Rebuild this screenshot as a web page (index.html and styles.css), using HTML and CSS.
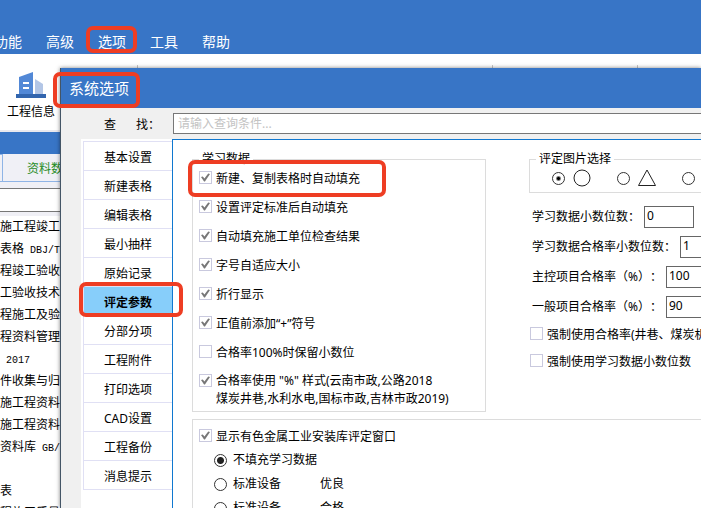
FILE: index.html
```html
<!DOCTYPE html>
<html lang="zh-CN">
<head>
    <meta charset="UTF-8">
    <meta name="viewport" content="width=device-width, initial-scale=1.0">
    <title>系统选项</title>
    <link rel="stylesheet" href="styles.css">
</head>
<body>

    <div class="main-window">
        <nav class="menu">
            <button>功能</button>
            <button>高级</button>
            <button class="mark mark-menu">选项</button>
            <button>工具</button>
            <button>帮助</button>
        </nav>

        <div class="toolbar">
            <div class="group first">
                <button class="tool">
                    <svg width="30" height="28" viewBox="0 0 30 28">
                        <path d="M3 6L17 1V24H3Z" fill="#5288d6"/>
                        <path d="M19 8L27 13V24H19Z" fill="#b3c6e6"/>
                        <path d="M7 11H13V13H7ZM7 16H13V18H7Z" fill="#fff"/>
                        <path d="M0 23H30V27H0Z" fill="#3265ae"/>
                    </svg>
                    工程信息
                </button>
            </div>
            <div class="group wide"></div>
            <div class="group"></div>
        </div>

        <div class="strip"></div>
        <div class="doc-tabs"><div class="tab-edge"></div><span>资料数据</span></div>
        <div class="filter"></div>

        <ul class="file-list">
            <li>施工程竣工验收</li>
            <li>表格<span class="latin"> DBJ/T</span></li>
            <li>程竣工验收资料</li>
            <li>工验收技术资料</li>
            <li>程施工及验收</li>
            <li>程资料管理规程</li>
            <li><span class="latin"> 2017</span></li>
            <li>件收集与归档</li>
            <li>施工程资料管理</li>
            <li>施工程资料管理</li>
            <li>资料库<span class="latin"> GB/T</span></li>
            <li></li>
            <li>表</li>
            <li>程施工质量验收</li>
        </ul>
    </div>

    <div class="dialog">
        <div class="dialog-title"><span class="mark mark-title">系统选项</span></div>
        <div class="search">
            <label for="query"><span>查</span><span>找：</span></label>
            <input type="text" id="query" placeholder="请输入查询条件...">
        </div>

        <div class="content">
            <div class="side">
                <button>基本设置</button>
                <button>新建表格</button>
                <button>编辑表格</button>
                <button>最小抽样</button>
                <button>原始记录</button>
                <button class="active mark mark-side">评定参数</button>
                <button>分部分项</button>
                <button>工程附件</button>
                <button>打印选项</button>
                <button>CAD设置</button>
                <button>工程备份</button>
                <button>消息提示</button>
            </div>

            <div class="panel">
                <div class="columns">
                    <fieldset class="learn">
                        <legend>学习数据</legend>
                        <label class="check mark mark-check"><input type="checkbox" checked>新建、复制表格时自动填充</label>
                        <label class="check"><input type="checkbox" checked>设置评定标准后自动填充</label>
                        <label class="check"><input type="checkbox" checked>自动填充施工单位检查结果</label>
                        <label class="check"><input type="checkbox" checked>字号自适应大小</label>
                        <label class="check"><input type="checkbox" checked>折行显示</label>
                        <label class="check"><input type="checkbox" checked>正值前添加“+”符号</label>
                        <label class="check"><input type="checkbox">合格率100%时保留小数位</label>
                        <label class="check two-line"><input type="checkbox" checked><span>合格率使用 "%" 样式(云南市政,公路2018<br>煤炭井巷,水利水电,国标市政,吉林市政2019)</span></label>
                    </fieldset>

                    <div class="right">
                        <fieldset class="shapes">
                            <legend>评定图片选择</legend>
                            <label>
                                <input type="radio" name="shape" aria-label="圆形" checked>
                                <svg width="18" height="18" viewBox="0 0 18 18"><circle cx="9" cy="9" r="8" fill="none" stroke="#222"/></svg>
                            </label>
                            <label>
                                <input type="radio" name="shape" aria-label="三角形">
                                <svg width="18" height="18" viewBox="0 0 18 18"><path d="M9 1L17.5 16.5H0.5Z" fill="none" stroke="#222"/></svg>
                            </label>
                            <label>
                                <input type="radio" name="shape" aria-label="无">
                            </label>
                        </fieldset>

                        <div class="field"><label for="digits">学习数据小数位数：</label><input type="text" id="digits" value="0"></div>
                        <div class="field"><label for="rateDigits">学习数据合格率小数位数：</label><input type="text" id="rateDigits" value="1"></div>
                        <div class="field"><label for="mainRate">主控项目合格率（%）：</label><input type="text" id="mainRate" value="100"></div>
                        <div class="field"><label for="normalRate">一般项目合格率（%）：</label><input type="text" id="normalRate" value="90"></div>
                        <label class="check"><input type="checkbox">强制使用合格率(井巷、煤炭机电)</label>
                        <label class="check"><input type="checkbox">强制使用学习数据小数位数</label>
                    </div>
                </div>

                <div class="metal">
                    <label class="check"><input type="checkbox" checked>显示有色金属工业安装库评定窗口</label>
                    <label class="option"><input type="radio" name="metal" checked><span>不填充学习数据</span></label>
                    <label class="option"><input type="radio" name="metal"><span>标准设备</span><span>优良</span></label>
                    <label class="option"><input type="radio" name="metal"><span>标准设备</span><span>合格</span></label>
                </div>
            </div>
        </div>
    </div>

</body>
</html>
```
FILE: styles.css
```css
* {
    margin: 0;
    padding: 0;
    box-sizing: border-box;
}

body {
    position: relative;
    height: 100vh;
    overflow: hidden;
    background: white;
    color: black;
    font-family: "Noto Sans", "Noto Sans CJK SC", sans-serif;
    font-size: 12px;
    line-height: 18px;
    text-spacing-trim: space-all;
}

button,
input {
    font: inherit;
    color: inherit;
    border: none;
    background: none;
}

button,
label,
li {
    white-space: nowrap;
}

/* red call-out frames */
.mark {
    position: relative;
}

.mark::after {
    content: "";
    position: absolute;
    border: 4px solid #ee3d23;
    border-radius: 7px;
    z-index: 5;
    pointer-events: none;
}

.mark-menu::after {
    inset: -6px -11px -1px -12px;
}

.mark-title::after {
    inset: -6px -11px -10px -16px;
}

.mark-side::after {
    inset: -5px -11px -2px -5px;
}

.mark-check::after {
    inset: -10px -26px -9px -11px;
}

/* main window */
.main-window {
    height: 100%;
    overflow: hidden;
}

.menu {
    display: flex;
    gap: 24px;
    height: 54px;
    padding-top: 32px;
    padding-right: 6px;
    margin-left: -6px;
    background: #3875c6;
    color: white;
    font-size: 14px;
    line-height: 20px;
}

.menu button {
    height: 20px;
}

.toolbar {
    display: flex;
    height: 78px;
    padding-top: 11px;
    border-bottom: 2px solid #e8e8ee;
}

.group {
    width: 145px;
    border-right: 1px solid #c8c8c8;
}

.group.first {
    width: 138px;
    padding: 6px 7px;
}

.group.wide {
    width: 355px;
}

.tool {
    display: flex;
    flex-direction: column;
    align-items: center;
    gap: 4px;
}

.strip {
    height: 22px;
    background: #3875c6;
}

.doc-tabs {
    display: flex;
    height: 28px;
    background: #f0f0f6;
    border-bottom: 1px solid #8fb4e6;
    color: #1f8c1f;
    line-height: 30px;
}

.tab-edge {
    width: 3px;
    margin-right: 24px;
    border: 1px solid #8fb4e6;
    border-width: 1px 1px 0 0;
}

.filter {
    height: 34px;
    border-top: 6px solid #f0f0f6;
    border-bottom: 4px solid #f0f0f6;
    background: linear-gradient(#777 1px, white 1px, white 23px, #777 23px, #777 24px);
}

.file-list {
    list-style: none;
    line-height: 22px;
}

.file-list li {
    height: 22px;
}

.latin {
    font-family: "Liberation Mono", monospace;
    font-size: 10px;
    white-space: pre;
}

/* options dialog */
.dialog {
    display: flex;
    flex-direction: column;
    position: absolute;
    top: 68px;
    right: 0;
    bottom: 0;
    left: 60px;
    border-left: 1px solid #456;
    background: #f0f0f0;
    box-shadow: 0 0 4px rgba(0, 0, 0, 0.5);
}

.dialog-title {
    height: 40px;
    padding: 10px 8px;
    background: #3875c6;
    color: white;
    font-size: 15px;
    line-height: 20px;
}

.dialog-title span {
    display: inline-block;
}

.search {
    display: flex;
    height: 31px;
    padding-top: 5px;
    padding-left: 43px;
}

.search label {
    display: flex;
    gap: 20px;
    width: 69px;
    line-height: 24px;
}

.search input {
    flex: 1;
    height: 21px;
    padding-left: 4px;
    border: 1px solid #777;
    border-right: none;
    background: white;
}

.search input::placeholder {
    color: #c3c3c3;
}

.content {
    display: flex;
    flex: 1;
    min-height: 0;
    padding-left: 20px;
}

.side {
    display: flex;
    flex-direction: column;
    width: 91px;
    padding-top: 2px;
    padding-left: 2px;
    background: white;
}

.side button {
    flex: none;
    height: 29px;
    padding-top: 3px;
    border-top: 1px solid #e0e0f4;
    border-left: 1px solid #e0e0f4;
}

.side button:last-child {
    height: 30px;
    border-bottom: 1px solid #e0e0f4;
}

.side .active {
    background: #87cefa;
    font-weight: bold;
}

.panel {
    flex: 1;
    min-width: 0;
    padding-top: 10px;
    padding-left: 19px;
    border-top: 1px solid #1078d0;
    border-left: 1px solid #1078d0;
    background: white;
}

.columns {
    display: flex;
    gap: 43px;
}

fieldset {
    border: 1px solid #dcdcdc;
}

legend {
    padding: 0 3px;
}

.learn {
    flex: none;
    width: 294px;
    height: 262px;
    padding-left: 6px;
}

.check {
    display: flex;
    align-items: center;
    gap: 4px;
    width: max-content;
    height: 18px;
    margin-bottom: 11px;
}

.learn .check:nth-of-type(1) {
    margin-top: 2px;
}

.check.two-line {
    align-items: flex-start;
    height: 36px;
    margin-top: -1px;
    margin-bottom: 0;
}

input[type="checkbox"] {
    appearance: none;
    position: relative;
    flex: none;
    width: 13px;
    height: 13px;
    margin-bottom: 3px;
    border: 1px solid #c9c9de;
    background: white;
}

.two-line input[type="checkbox"] {
    margin-top: 2px;
}

input[type="checkbox"]:checked::after {
    content: "";
    position: absolute;
    inset: 1px;
    background: #777;
    clip-path: polygon(0 45%, 20% 38%, 38% 62%, 80% 5%, 100% 12%, 44% 95%, 34% 95%);
}

input[type="radio"] {
    appearance: none;
    flex: none;
    width: 13px;
    height: 13px;
    border: 1px solid #333;
    border-radius: 50%;
    background: white;
}

input[type="radio"]:checked {
    background: radial-gradient(circle, #222 3px, white 4px);
}

.right {
    flex: 1;
    min-width: 0;
}

.shapes {
    display: flex;
    gap: 26px;
    min-width: 0;
    height: 43px;
    padding-left: 6px;
    margin-bottom: 13px;
    border-right: none;
}

.shapes label {
    display: flex;
    align-items: center;
    gap: 8px;
    height: 18px;
    margin-top: 1px;
}

.shapes label:first-of-type {
    margin-left: 16px;
}

.shapes input[type="radio"]:checked {
    background: radial-gradient(circle, #000 1px, white 3px);
}

.field {
    display: flex;
    align-items: center;
    height: 22px;
    margin-bottom: 8px;
    padding-left: 3px;
}

.field label {
    margin-right: 4px;
}

.field input {
    flex: none;
    width: 50px;
    height: 22px;
    padding: 0 2px 3px;
    border: 1px solid #666;
}

.right .check {
    margin-bottom: 9px;
}

.right .check input {
    margin-left: 1px;
}

.metal {
    height: 120px;
    padding: 8px 6px;
    margin-top: 7px;
    border: 1px solid #dcdcdc;
    border-right: none;
}

.metal .check {
    margin-bottom: 5px;
}

.option {
    display: flex;
    align-items: center;
    gap: 6px;
    height: 18px;
    padding-left: 15px;
    margin-bottom: 6px;
}

.option span {
    min-width: 81px;
}
```
